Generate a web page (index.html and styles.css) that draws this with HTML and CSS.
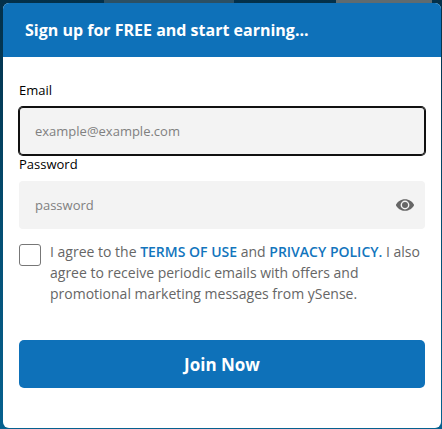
FILE: index.html
```html
<!DOCTYPE html>
<html lang="en">
<head>
<meta charset="utf-8">
<title>Sign up</title>
<link rel="stylesheet" href="styles.css">
</head>
<body>
<div class="card">
  <div class="head">Sign up for FREE and start earning...</div>
  <form class="form">
    <label class="lab lab-email" for="em">Email</label>
    <div class="field focus"><input id="em" class="inp" placeholder="example@example.com"></div>
    <label class="lab lab-pass" for="pw">Password</label>
    <div class="field"><input id="pw" class="inp" placeholder="password">
      <svg class="eye" viewBox="0 0 24 24" width="20" height="20"><path fill="#666" fill-rule="evenodd" d="M12 5C7 5 2.700 8 1 12c1.700 4 6 7 11 7s9.300-3 11-7c-1.700-4-6-7-11-7zm0 12.300a5.300 5.300 0 1 1 0-10.600 5.300 5.300 0 0 1 0 10.600z"/><circle fill="#666" cx="12" cy="12" r="3.600"/></svg>
    </div>
    <div class="agree">
      <span class="box"></span>
      <p class="txt">I agree to the <a class="lnk">TERMS OF USE</a> and <a class="lnk">PRIVACY POLICY.</a> I also agree to receive periodic emails with offers and promotional marketing messages from ySense.</p>
    </div>
    <button type="button" class="btn">Join Now</button>
  </form>
</div>
</body>
</html>
```
FILE: styles.css
```css
html, body { margin: 0; height: 100%; }
body {
  background:
    linear-gradient(#2c5064, #2c5064) 104px 0 / 130px 3px no-repeat,
    linear-gradient(#5f6b70, #5f6b70) 336px 0 / 96px 3px no-repeat,
    linear-gradient(180deg, #03304a 0%, #03405e 30%, #044f74 55%, #06618f 100%);
  font-family: "Open Sans", sans-serif;
  padding: 3px 1px 1px 3px;
  box-sizing: border-box;
  overflow: hidden;
}
.card {
  background: #fff;
  height: 425px;
  border-radius: 6px;
  overflow: hidden;
}
.head {
  background: #0e71b9;
  color: #fff;
  height: 54px;
  line-height: 54px;
  padding-left: 22px;
  font-size: 16px;
  font-weight: 700;
}
.form { padding: 0 16px; display: flex; flex-direction: column; }
.lab { font-size: 13px; line-height: 16px; color: #000; }
.lab-email { margin-top: 25px; height: 25px; }
.lab-pass { height: 25px; }
.field {
  background: #f3f3f3;
  border-radius: 4px;
  height: 48px;
  display: flex;
  align-items: center;
  padding: 0 16px;
}
.field.focus { box-shadow: 0 0 0 1px #111, inset 0 0 0 1px #111; margin-bottom: 1px; }
.inp {
  flex: 1;
  min-width: 0;
  border: 0;
  outline: 0;
  background: transparent;
  font: 13px "Open Sans", sans-serif;
  padding: 0;
}
.inp::placeholder { color: #808080; opacity: 1; }
.eye { flex: none; margin-right: -6px; margin-left: 8px; }
.agree { display: flex; gap: 9px; margin-top: 15px; }
.box {
  flex: none;
  width: 20px;
  height: 20px;
  border: 1px solid #777;
  border-radius: 3px;
}
.txt { margin: -3px 0 0; font-size: 14px; line-height: 21px; color: #666; }
.lnk { color: #1275bd; font-weight: 600; }
.btn {
  margin-top: 36px;
  height: 48px;
  border: 0;
  border-radius: 5px;
  background: #0e71b9;
  color: #fff;
  font: 700 17px "Open Sans", sans-serif;
}
```
